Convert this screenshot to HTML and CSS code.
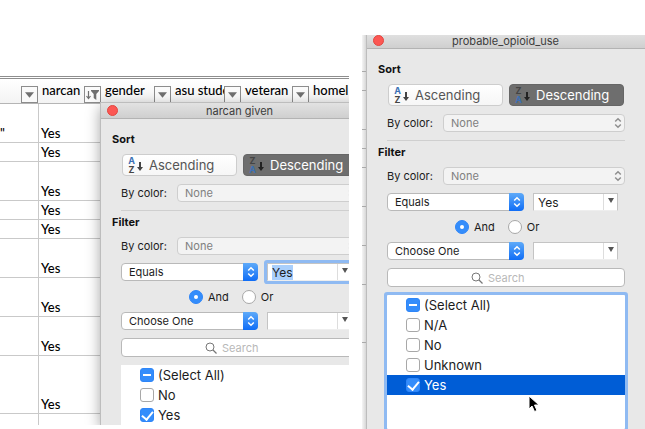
FILE: index.html
```html
<!DOCTYPE html>
<html lang="en">
<head>
<meta charset="utf-8">
<title>Column filters</title>
<link rel="stylesheet" href="styles.css">
</head>
<body>
<svg class="defs" aria-hidden="true">
  <symbol id="down" viewBox="0 0 6 9"><path d="M2 0h2v5h2L3 9 0 5h2z" fill="currentColor"/></symbol>
  <symbol id="updown" viewBox="0 0 8 12"><path d="M1.2 4.5 4 1.7l2.800 2.800M1.200 7.500 4 10.300l2.800-2.800" fill="none" stroke="currentColor" stroke-width="1.500"/></symbol>
  <symbol id="lens" viewBox="0 0 12 12"><circle cx="5" cy="5" r="4" fill="none" stroke="currentColor"/><path d="m8 8 3.500 3.500" stroke="currentColor" stroke-width="1.200"/></symbol>
  <symbol id="tri" viewBox="0 0 10 6"><path d="M0 0h10L5 6z" fill="currentColor"/></symbol>
  <symbol id="caret" viewBox="0 0 6 5"><path d="M0 0h6L3 5z" fill="currentColor"/></symbol>
  <symbol id="funnel" viewBox="0 0 13 10"><path d="M2.500 1v7M.5 6l2 2.500 2-2.500" fill="none" stroke="currentColor" stroke-width="1.200"/><path d="M5 0h8v1L10.300 4v6L7.700 8V4L5 1z" fill="currentColor"/></symbol>
</svg>
<main class="shots">
  <section class="shot shot-left">
    <table class="sheet">
      <colgroup><col class="c1"><col class="c2"><col class="c3"><col class="c3"><col class="c4"><col></colgroup>
      <thead>
        <tr>
          <th><div class="head"><span></span><button class="drop" aria-label="Filter"><svg width="9" height="6"><use href="#tri"/></svg></button></div></th>
          <th><div class="head"><span>narcan</span><button class="drop" aria-label="Filter narcan"><svg width="13" height="10"><use href="#funnel"/></svg></button></div></th>
          <th><div class="head"><span>gender</span><button class="drop" aria-label="Filter gender"><svg width="9" height="6"><use href="#tri"/></svg></button></div></th>
          <th><div class="head"><span>asu stude</span><button class="drop" aria-label="Filter asu student"><svg width="9" height="6"><use href="#tri"/></svg></button></div></th>
          <th><div class="head"><span>veteran</span><button class="drop" aria-label="Filter veteran"><svg width="9" height="6"><use href="#tri"/></svg></button></div></th>
          <th><div class="head"><span>homele</span></div></th>
        </tr>
      </thead>
      <tbody>
        <tr class="r2"><td class="quote">"</td><td>Yes</td><td colspan="4"></td></tr>
        <tr class="r1"><td></td><td>Yes</td><td colspan="4"></td></tr>
        <tr class="r2"><td></td><td>Yes</td><td colspan="4"></td></tr>
        <tr class="r1"><td></td><td>Yes</td><td colspan="4"></td></tr>
        <tr class="r1"><td></td><td>Yes</td><td colspan="4"></td></tr>
        <tr class="r2"><td></td><td>Yes</td><td colspan="4"></td></tr>
        <tr class="r2"><td></td><td>Yes</td><td colspan="4"></td></tr>
        <tr class="r2"><td></td><td>Yes</td><td colspan="4"></td></tr>
        <tr class="r3"><td></td><td>Yes</td><td colspan="4"></td></tr>
        <tr class="r2"><td></td><td></td><td colspan="4"></td></tr>
      </tbody>
    </table>

    <form class="dialog floating">
      <header class="titlebar"><button type="button" class="close" aria-label="Close"></button><h2>narcan given</h2></header>
      <h3>Sort</h3>
      <div class="sorts">
        <button type="button" class="sort"><span class="az"><b class="blue">A</b><b>Z</b></span><svg width="6" height="9"><use href="#down"/></svg><span>Ascending</span></button>
        <button type="button" class="sort on"><span class="az"><b>Z</b><b class="blue">A</b></span><svg width="6" height="9"><use href="#down"/></svg><span>Descending</span></button>
      </div>
      <div class="color"><label for="l-sc">By color:</label><span class="pick off"><select id="l-sc" disabled><option>None</option></select><i><svg width="8" height="12"><use href="#updown"/></svg></i></span></div>
      <hr>
      <h3 class="filter">Filter</h3>
      <div class="color"><label for="l-fc">By color:</label><span class="pick off"><select id="l-fc" disabled><option>None</option></select><i><svg width="8" height="12"><use href="#updown"/></svg></i></span></div>
      <div class="rule">
        <span class="pick"><select aria-label="First condition"><option>Equals</option></select><i><svg width="8" height="12"><use href="#updown"/></svg></i></span>
        <span class="combo focus"><span class="entry" role="textbox" aria-label="First value" contenteditable="true"><mark>Yes</mark></span><button type="button" aria-label="Values"><svg width="6" height="5"><use href="#caret"/></svg></button></span>
      </div>
      <div class="join"><label><input type="radio" name="lj" checked>And</label><label><input type="radio" name="lj">Or</label></div>
      <div class="rule">
        <span class="pick"><select aria-label="Second condition"><option>Choose One</option></select><i><svg width="8" height="12"><use href="#updown"/></svg></i></span>
        <span class="combo"><input class="entry" type="text" aria-label="Second value"><button type="button" aria-label="Values"><svg width="6" height="5"><use href="#caret"/></svg></button></span>
      </div>
      <div class="search"><svg width="12" height="12"><use href="#lens"/></svg><input type="text" placeholder="Search" aria-label="Search"></div>
      <ul class="values">
        <li><label><input type="checkbox" class="mixed">(Select All)</label></li>
        <li><label><input type="checkbox">No</label></li>
        <li><label><input type="checkbox" checked>Yes</label></li>
      </ul>
    </form>
  </section>

  <section class="shot shot-right">
    <div class="edge"><i class="r2"></i><i class="r1"></i><i class="r2"></i><i class="r1"></i><i class="r1"></i><i class="r2 active"></i><i class="r2"></i><i class="r2"></i><i class="r3"></i></div>
    <form class="dialog">
      <header class="titlebar"><button type="button" class="close" aria-label="Close"></button><h2>probable_opioid_use</h2></header>
      <h3>Sort</h3>
      <div class="sorts">
        <button type="button" class="sort"><span class="az"><b class="blue">A</b><b>Z</b></span><svg width="6" height="9"><use href="#down"/></svg><span>Ascending</span></button>
        <button type="button" class="sort on"><span class="az"><b>Z</b><b class="blue">A</b></span><svg width="6" height="9"><use href="#down"/></svg><span>Descending</span></button>
      </div>
      <div class="color"><label for="r-sc">By color:</label><span class="pick off"><select id="r-sc" disabled><option>None</option></select><i><svg width="8" height="12"><use href="#updown"/></svg></i></span></div>
      <hr>
      <h3 class="filter">Filter</h3>
      <div class="color"><label for="r-fc">By color:</label><span class="pick off"><select id="r-fc" disabled><option>None</option></select><i><svg width="8" height="12"><use href="#updown"/></svg></i></span></div>
      <div class="rule">
        <span class="pick"><select aria-label="First condition"><option>Equals</option></select><i><svg width="8" height="12"><use href="#updown"/></svg></i></span>
        <span class="combo"><input class="entry" type="text" value="Yes" aria-label="First value"><button type="button" aria-label="Values"><svg width="6" height="5"><use href="#caret"/></svg></button></span>
      </div>
      <div class="join"><label><input type="radio" name="rj" checked>And</label><label><input type="radio" name="rj">Or</label></div>
      <div class="rule">
        <span class="pick"><select aria-label="Second condition"><option>Choose One</option></select><i><svg width="8" height="12"><use href="#updown"/></svg></i></span>
        <span class="combo"><input class="entry" type="text" aria-label="Second value"><button type="button" aria-label="Values"><svg width="6" height="5"><use href="#caret"/></svg></button></span>
      </div>
      <div class="search"><svg width="12" height="12"><use href="#lens"/></svg><input type="text" placeholder="Search" aria-label="Search"></div>
      <ul class="values focus">
        <li><label><input type="checkbox" class="mixed">(Select All)</label></li>
        <li><label><input type="checkbox">N/A</label></li>
        <li><label><input type="checkbox">No</label></li>
        <li><label><input type="checkbox">Unknown</label></li>
        <li class="selected"><label><input type="checkbox" checked>Yes</label></li>
      </ul>
      <svg class="pointer" viewBox="0 0 12 18" width="12" height="18" aria-hidden="true"><path d="M1 1v13l3-3 2.500 5.500 2.500-1L6.500 10H11z" fill="#000" stroke="#fff"/></svg>
    </form>
  </section>
</main>
</body>
</html>
```
FILE: styles.css
```css
* { box-sizing: border-box; }
body {
  margin: 0;
  background: #fff;
  color: #1c1c1c;
  font: 11px/14px Inter, "Liberation Sans", sans-serif;
  overflow: hidden;
}
button, input, select { font: inherit; color: inherit; margin: 0; padding: 0; }
h2, h3, ul { margin: 0; padding: 0; }
svg { display: block; flex: none; }
.defs { position: absolute; width: 0; height: 0; }

.shots {
  display: grid;
  grid-template-columns: 349fr 283fr;
  gap: 13px;
  height: 100vh;
}
.shot { overflow: hidden; min-width: 0; }
.shot-left { position: relative; margin-bottom: 4px; padding-top: 76px; }
.shot-right { display: grid; grid-template-columns: 5px 1fr; margin-top: 35px; }

/* Worksheet */
.sheet {
  width: 100%;
  table-layout: fixed;
  border-collapse: separate;
  border-spacing: 0;
  border-top: 3px double #8e8e8e;
  color: #000;
  font: 500 13px/17px Lato, "Liberation Sans", sans-serif;
}
.c1 { width: 39px; }
.c2 { width: 63px; }
.c3 { width: 70px; }
.c4 { width: 68px; }
.sheet th { padding: 0; font-weight: 500; text-align: left; border-bottom: 1px solid #b5b5b5; background: linear-gradient(#fff, #f3f3f3); }
.head { display: flex; align-items: flex-end; height: 24px; padding-right: 1px; }
.head span { flex: 1; min-width: 0; height: 21px; padding-left: 3px; overflow: hidden; white-space: nowrap; }
.drop {
  display: grid;
  place-items: center;
  flex: none;
  width: 17px;
  height: 17px;
  border: 1px solid #8c8c8c;
  background: #fafafa;
  color: #707070;
}
.sheet td { padding: 0 0 0 2px; vertical-align: bottom; border-bottom: 1px solid #c9c9c9; border-right: 1px solid #c9c9c9; }
.sheet .quote { padding: 0; }
.r1 { height: 19px; }
.r2 { height: 39px; }
.r3 { height: 58px; }

/* Sliver of worksheet beside the second dialog */
.edge { display: flex; flex-direction: column; margin-top: -2px; background: linear-gradient(90deg, #f5f5f5, #cfcfcf); }
.edge i { flex: none; border-bottom: 1px solid #aaa; }
.edge .active { border-right: 1px solid #217346; }

/* Filter dialog */
.dialog {
  position: relative;
  display: flex;
  flex-direction: column;
  margin-top: -2px;
  padding: 0 20px;
  background: #e8e8e8;
  box-shadow: 0 0 0 1px #bdbdbd;
}
.floating {
  position: absolute;
  top: 103px;
  bottom: 0;
  left: 101px;
  width: 278px;
  margin: 0;
  box-shadow: 0 0 0 1px #bdbdbd, 0 4px 14px #0006;
}
.titlebar {
  display: flex;
  align-items: center;
  height: 16px;
  margin: 0 -20px 13px;
  padding: 0 8px 0 6px;
  border-bottom: 1px solid #b3b3b3;
  background: linear-gradient(#e2e2e2, #cfcfcf);
}
.titlebar h2 { margin: 0 auto; padding-right: 10px; font-size: 11px; font-weight: 400; color: #3c3c3c; }
.close { width: 11px; height: 11px; border: 1px solid #e2463f; border-radius: 50%; background: #fc5753; }
h3 { margin-left: -9px; font-size: 11px; line-height: 14px; font-weight: 700; color: #111; }

.sorts { display: flex; gap: 6px; margin: 8px 1px; }
.sort {
  display: flex;
  align-items: center;
  flex: 1;
  height: 22px;
  padding-left: 5px;
  border: 1px solid #cdcdcd;
  border-radius: 4px;
  background: linear-gradient(#fff, #f6f6f6);
  color: #555;
  font-size: 13px;
}
.sort svg { margin: 2px 6px 0 2px; color: #444; }
.az { display: flex; flex-direction: column; width: 7px; font-size: 9px; line-height: 9px; color: #444; }
.az .blue { color: #3b70b5; }
.sort.on { border-color: #666; background: #6e6e6e; color: #fff; }
.sort.on svg { color: #222; }

.color { display: flex; justify-content: space-between; align-items: center; }
.pick {
  display: flex;
  position: relative;
  width: 137px;
  height: 18px;
  border: 1px solid #b9b9b9;
  border-radius: 4px;
  background: #fff;
}
.pick select { appearance: none; flex: 1; padding: 0 20px 0 7px; border: 0; background: none; opacity: 1; }
.pick i {
  position: absolute;
  top: -1px;
  right: -1px;
  bottom: -1px;
  display: grid;
  place-items: center;
  width: 15px;
  border-radius: 0 4px 4px 0;
  background: linear-gradient(#5eaaf9, #0f6df6);
  color: #fff;
  pointer-events: none;
}
.pick.off { width: 182px; border-color: #cecece; background: #f3f3f3; color: #808080; }
.pick.off i { background: none; color: #8f8f8f; }
hr { width: 100%; margin: 8px 0 4px; border: 0; border-top: 1px solid #cfcfcf; }
.filter { margin-bottom: 8px; }

.rule { display: flex; gap: 9px; margin-top: 8px; }
.combo { display: flex; width: 85px; height: 18px; border: 1px solid #c4c4c4; border-bottom-color: #eee; background: #fff; }
.combo .entry { flex: 1; width: 0; padding: 2px 0 0 4px; border: 0; outline: 0; background: none; font-size: 12px; line-height: 14px; }
.combo mark { background: #a9cffc; color: inherit; }
.combo button { display: grid; justify-items: center; align-items: start; width: 14px; padding-top: 4px; border: 0; border-left: 1px solid #ddd; background: #fff; color: #555; }
.focus { box-shadow: 0 0 0 3px #8fbaf2; border-radius: 1px; }
.join { display: flex; gap: 13px; height: 14px; margin: 9px 0 0 68px; }
.join label, .values label { display: flex; align-items: center; gap: 5px; }

input[type="radio"], input[type="checkbox"] {
  appearance: none;
  display: grid;
  place-items: center;
  flex: none;
  width: 14px;
  height: 14px;
  border: 1px solid #a8a8a8;
  border-radius: 3px;
  background: #fff;
}
input[type="radio"] { border-radius: 50%; }
input:checked, input.mixed { border-color: #2f86f8 !important; background: #348dfb !important; }
input[type="radio"]:checked::before { content: ""; width: 4px; height: 4px; border-radius: 50%; background: #fff; }
input.mixed::before { content: ""; width: 8px; height: 2px; background: #fff; }
input[type="checkbox"]:checked::before {
  content: "";
  width: 5px;
  height: 9px;
  margin-bottom: 2px;
  border: solid #fff;
  border-width: 0 2px 2px 0;
  transform: rotate(40deg);
}

.search {
  display: flex;
  align-items: center;
  justify-content: center;
  gap: 5px;
  height: 19px;
  margin-top: 8px;
  border: 1px solid #b9b9b9;
  border-radius: 4px;
  background: #fff;
  color: #777;
}
.search input { width: 53px; border: 0; outline: 0; background: none; }
.search input::placeholder { color: #b8b8b8; opacity: 1; }

.values { flex: 1; margin-top: 8px; list-style: none; background: #fff; font-size: 13px; line-height: 20px; }
.values li { height: 20px; padding-left: 19px; }
.values label { gap: 4px; }
.selected { background: #005dd6; color: #fff; }
.pointer { position: absolute; top: 362px; left: 161px; }
```
